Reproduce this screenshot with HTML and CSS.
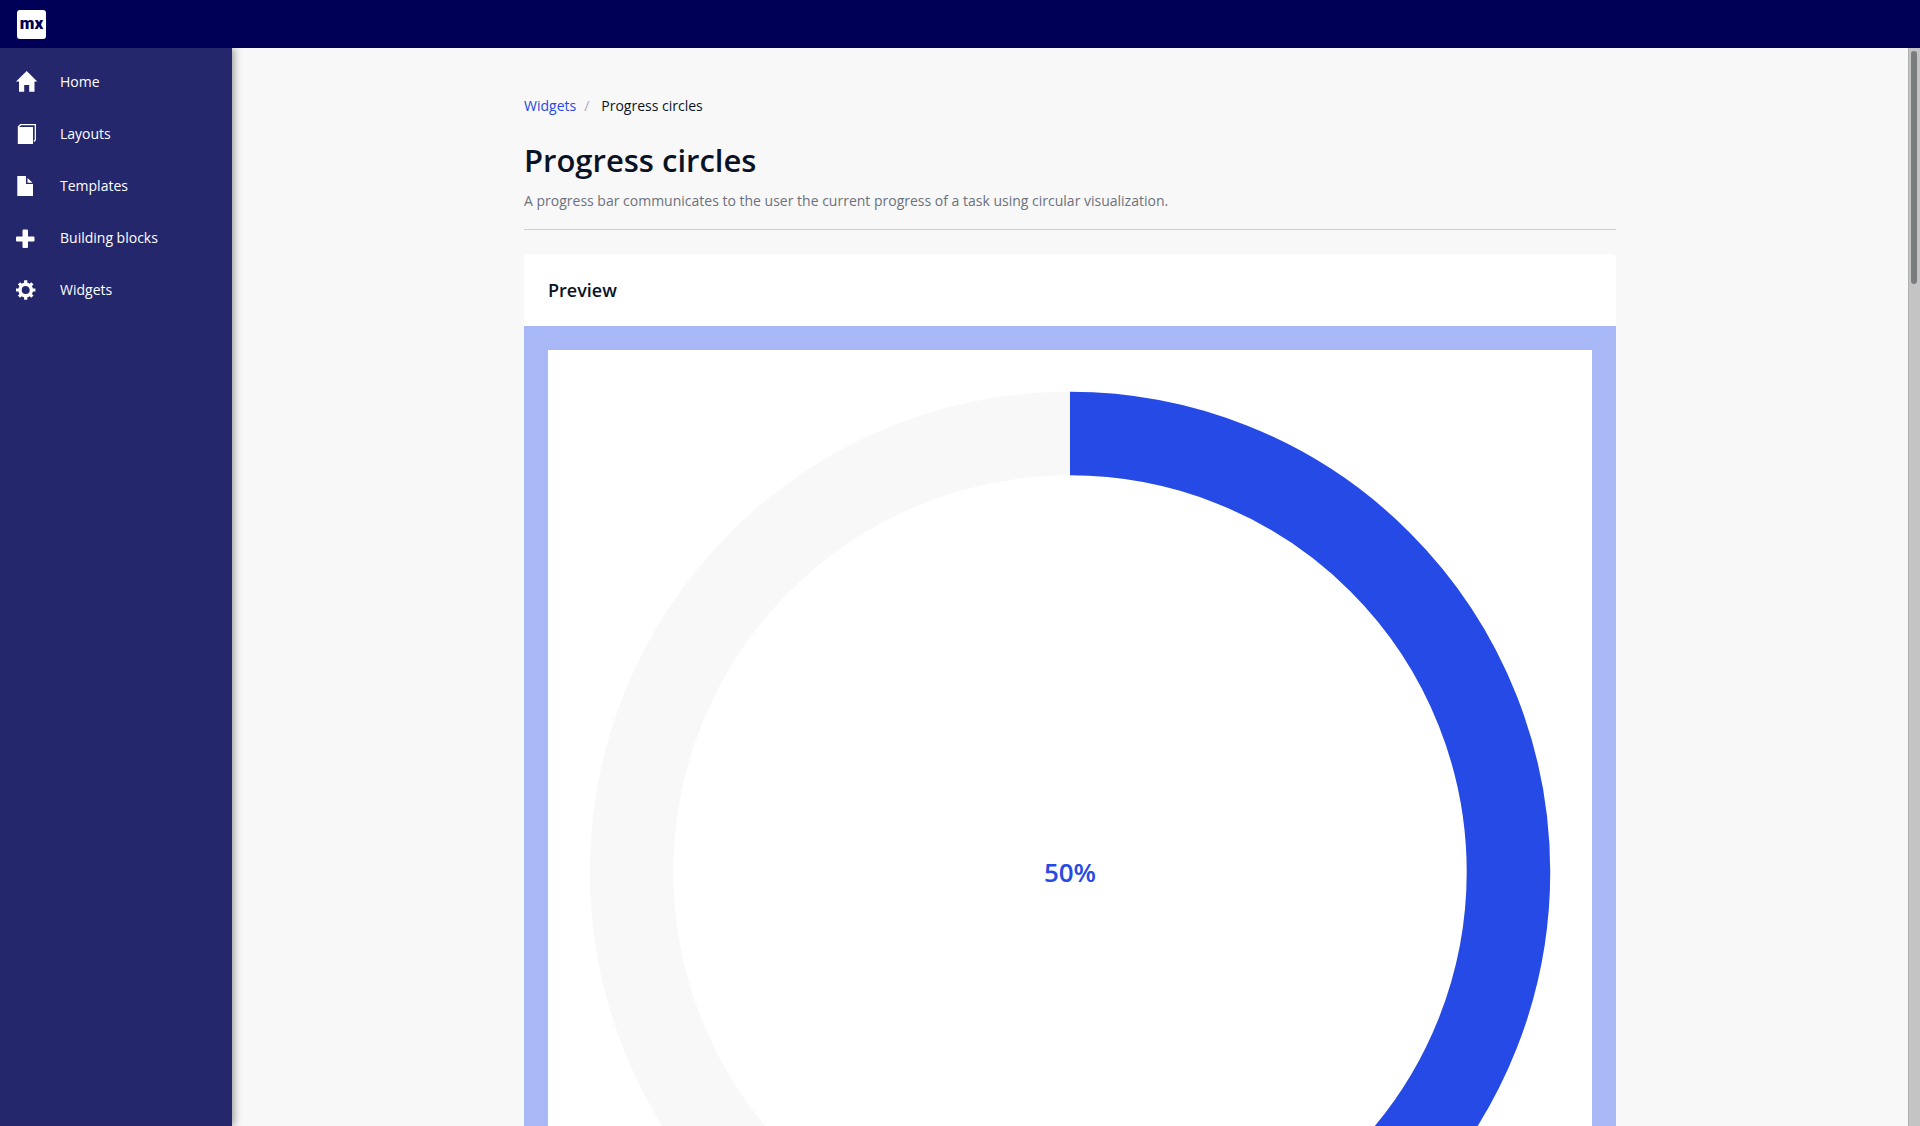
FILE: index.html
```html
<!DOCTYPE html>
<html lang="en">
<head>
  <meta charset="utf-8">
  <meta name="viewport" content="width=device-width, initial-scale=1">
  <title>Progress circles</title>
  <link rel="stylesheet" href="styles.css">
</head>
<body>
  <header class="topbar">
    <a class="logo" href="#">mx</a>
  </header>
  <div class="shell">
    <nav class="sidebar" aria-label="Main">
      <a class="nav-item" href="#">
        <svg class="nav-icon" viewBox="0 0 22 22"><path d="M10.700 0 21.300 10.500H18.500V20.800H13.200V14H8.200V20.800H3V10.500H0Z"/></svg>
        <span>Home</span>
      </a>
      <a class="nav-item" href="#">
        <svg class="nav-icon" viewBox="0 0 22 22"><path d="M1.800 4H17V21H1.800Z"/><path d="M2.200 4 4.500 1.700H19.300V17L17.800 18.500" fill="none" stroke="#fff" stroke-width="1.300"/></svg>
        <span>Layouts</span>
      </a>
      <a class="nav-item" href="#">
        <svg class="nav-icon" viewBox="0 0 22 22"><path d="M1.300 1H10V9H17V21H1.300Z"/><path d="M11.500 3 16.600 7.700H11.500Z"/></svg>
        <span>Templates</span>
      </a>
      <a class="nav-item" href="#">
        <svg class="nav-icon" viewBox="0 0 22 22"><path d="M7.500 2.500h3.500a1 1 0 0 1 1 1V9.500h5.500a1 1 0 0 1 1 1v3a1 1 0 0 1-1 1H12v5.500a1 1 0 0 1-1 1H7.500a1 1 0 0 1-1-1V14.500H1a1 1 0 0 1-1-1v-3a1 1 0 0 1 1-1H6.500V3.500a1 1 0 0 1 1-1Z"/></svg>
        <span>Building blocks</span>
      </a>
      <a class="nav-item" href="#">
        <svg class="nav-icon" viewBox="0 0 22 22">
          <circle cx="9.700" cy="11" r="5.700" fill="none" stroke="#fff" stroke-width="3.400"/>
          <g stroke="#fff" stroke-width="3.200">
            <path d="M9.700 1.300V4.900M9.700 17.100V20.700M0 11H3.600M15.800 11H19.400"/>
            <path d="M3 4.300 5.400 6.700M14 15.300 16.400 17.700M3 17.700 5.400 15.300M14 6.700 16.400 4.300"/>
          </g>
        </svg>
        <span>Widgets</span>
      </a>
    </nav>
    <main class="content">
      <div class="container">
        <ol class="breadcrumb">
          <li><a href="#">Widgets</a></li>
          <li aria-current="page">Progress circles</li>
        </ol>
        <div class="page-header">
          <h1>Progress circles</h1>
          <p>A progress bar communicates to the user the current progress of a task using circular visualization.</p>
        </div>
        <section class="card">
          <h2>Preview</h2>
          <div class="preview">
            <svg class="progress" viewBox="0 0 100 100" role="img" aria-label="50% complete">
              <circle class="progress-trail" cx="50" cy="50" r="42"/>
              <path class="progress-value" d="M50 8A42 42 0 0 1 50 92"/>
            </svg>
            <span class="progress-label">50%</span>
          </div>
        </section>
      </div>
    </main>
    <div class="scroll-track"><div class="scroll-thumb"></div></div>
  </div>
</body>
</html>
```
FILE: styles.css
```css
* {
  box-sizing: border-box;
}

body {
  display: flex;
  flex-direction: column;
  height: 100vh;
  margin: 0;
  overflow: hidden;
  background: #f8f8f8;
  color: #0a1325;
  font: 14px/20px "Open Sans", sans-serif;
}

a {
  color: #264ae5;
  text-decoration: none;
}

.topbar {
  display: flex;
  flex: none;
  align-items: center;
  height: 48px;
  padding-left: 17px;
  background: #000056;
}

.logo {
  display: flex;
  align-items: center;
  justify-content: center;
  width: 29px;
  height: 29px;
  padding-bottom: 3px;
  border-radius: 3px;
  background: #fff;
  color: #000056;
  font-family: Roboto, "Open Sans", sans-serif;
  font-size: 17px;
  font-weight: 900;
}

.shell {
  display: flex;
  flex: 1;
  min-height: 0;
}

.sidebar {
  z-index: 1;
  flex: none;
  width: 232px;
  padding-top: 8px;
  background: #24276c;
  box-shadow: 2px 0 8px rgba(0, 0, 0, 0.4);
  clip-path: inset(0 -12px 0 0);
}

.nav-item {
  display: flex;
  align-items: center;
  gap: 22px;
  height: 52px;
  padding-left: 16px;
  color: #fff;
}

.nav-icon {
  width: 22px;
  height: 22px;
  fill: #fff;
}

.content {
  flex: 1;
  overflow: hidden;
}

.container {
  max-width: 1140px;
  margin: 0 auto;
  padding: 48px 24px;
}

.breadcrumb {
  display: flex;
  margin: 0 0 24px;
  padding: 0;
  list-style: none;
}

.breadcrumb li + li::before {
  content: "/";
  padding: 0 12px 0 8px;
  color: #a9acb3;
}

.page-header {
  margin-bottom: 24px;
  padding-bottom: 18px;
  border-bottom: 1px solid #ced0d3;
}

h1 {
  margin: 0 0 11px;
  font-size: 31px;
  font-weight: 600;
  line-height: 40px;
}

.page-header p {
  margin: 0;
  color: #6c717c;
}

.card {
  overflow: hidden;
  border-radius: 4px;
  background: #fff;
}

h2 {
  margin: 0;
  padding: 24px;
  font-size: 18px;
  font-weight: 600;
  line-height: 24px;
}

.preview {
  display: grid;
  place-items: center;
  border: 24px solid #a8b7f5;
}

.progress,
.progress-label {
  grid-area: 1 / 1;
}

.progress {
  width: 100%;
  fill: none;
  stroke-width: 8;
}

.progress-trail {
  stroke: #f8f8f8;
}

.progress-value {
  stroke: #264ae5;
}

.progress-label {
  color: #264ae5;
  font-size: 26px;
  font-weight: 600;
  line-height: 36px;
}

.scroll-track {
  flex: none;
  width: 12px;
  padding: 3px 3px 3px 2px;
  border-left: 1px solid #aeafae;
  background: #c3c4c3;
}

.scroll-thumb {
  width: 6px;
  height: 21.75%;
  border-radius: 3px;
  background: #797d7d;
}
```
